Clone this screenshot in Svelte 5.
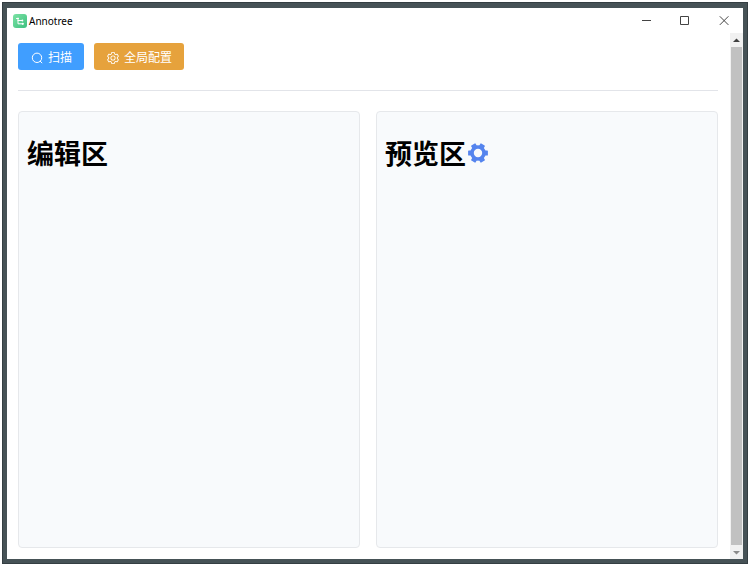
<script lang="ts">
  const teeth = [0, 60, 120, 180, 240, 300]
</script>

<div class="window">
  <header class="titlebar">
    <svg class="titlebar__logo" viewBox="0 0 14 14" aria-hidden="true">
      <defs>
        <linearGradient id="logo" x1="0" y1="0" x2="1" y2="1">
          <stop offset="0" stop-color="#7be2a4" />
          <stop offset="1" stop-color="#3fc080" />
        </linearGradient>
      </defs>
      <rect width="14" height="14" rx="3" fill="url(#logo)" />
      <path d="M3.5 4.5h2M5 4v5.8h4.5M5 6.5h4" fill="none" stroke="#fff" stroke-linecap="round" />
      <circle cx="9.4" cy="6.5" r=".9" fill="#fff" />
      <circle cx="9.8" cy="9.8" r="1.1" fill="#fff" />
    </svg>
    <span class="titlebar__name">Annotree</span>
    <button class="titlebar__control" aria-label="Minimize">
      <svg viewBox="0 0 10 10"><path d="M1 4.5h9" /></svg>
    </button>
    <button class="titlebar__control" aria-label="Maximize">
      <svg viewBox="0 0 10 10"><path d="M.5.5h8v8h-8z" /></svg>
    </button>
    <button class="titlebar__control" aria-label="Close">
      <svg viewBox="0 0 10 10"><path d="M.8.3l8.6 8.6M9.4.3L.8 8.9" /></svg>
    </button>
  </header>

  <div class="body">
    <main class="content">
      <div class="toolbar">
        <button class="button button--primary">
          <svg viewBox="0 0 12 12" aria-hidden="true">
            <circle cx="6" cy="5.8" r="4.7" fill="none" stroke="currentColor" />
            <path d="M9.2 9.2l1.7 1.7" stroke="currentColor" stroke-linecap="round" />
          </svg>
          <span>扫描</span>
        </button>
        <button class="button button--warning">
          <svg viewBox="64 64 896 896" aria-hidden="true">
            <path
              fill="currentColor"
              d="M600.704 64a32 32 0 0 1 30.464 22.208l35.2 109.376c14.784 7.232 28.928 15.36 42.432 24.512l112.384-24.192a32 32 0 0 1 34.432 15.36L944.32 364.8a32 32 0 0 1-4.032 37.504l-77.12 85.12a357.12 357.12 0 0 1 0 49.024l77.12 85.248a32 32 0 0 1 4.032 37.504l-88.704 153.6a32 32 0 0 1-34.432 15.296L708.8 803.904c-13.44 9.088-27.648 17.28-42.368 24.512l-35.264 109.376A32 32 0 0 1 600.704 960H423.296a32 32 0 0 1-30.464-22.208L357.696 828.48a351.616 351.616 0 0 1-42.56-24.64l-112.32 24.256a32 32 0 0 1-34.432-15.36L79.68 659.2a32 32 0 0 1 4.032-37.504l77.12-85.248a357.12 357.12 0 0 1 0-48.896l-77.12-85.248A32 32 0 0 1 79.68 364.8l88.704-153.6a32 32 0 0 1 34.432-15.296l112.32 24.256c13.568-9.152 27.776-17.408 42.56-24.64l35.2-109.312A32 32 0 0 1 423.232 64H600.64zm-23.424 64H446.72l-36.352 113.088-24.512 11.968a294.113 294.113 0 0 0-34.816 20.096l-22.656 15.36-116.224-25.088-65.28 113.152 79.68 88.192-1.92 27.136a293.12 293.12 0 0 0 0 40.192l1.92 27.136-79.808 88.192 65.344 113.152 116.224-25.024 22.656 15.296a294.113 294.113 0 0 0 34.816 20.096l24.512 11.968L446.72 896h130.688l36.48-113.152 24.448-11.904a288.282 288.282 0 0 0 34.752-20.096l22.592-15.296 116.288 25.024 65.28-113.152-79.744-88.192 1.92-27.136a293.12 293.12 0 0 0 0-40.256l-1.92-27.136 79.808-88.128-65.344-113.152-116.288 24.96-22.592-15.232a287.616 287.616 0 0 0-34.752-20.096l-24.448-11.904L577.344 128zM512 320a192 192 0 1 1 0 384 192 192 0 0 1 0-384zm0 64a128 128 0 1 0 0 256 128 128 0 0 0 0-256z"
            />
          </svg>
          <span>全局配置</span>
        </button>
      </div>

      <hr class="divider" />

      <div class="panels">
        <section class="panel">
          <h1>编辑区</h1>
        </section>
        <section class="panel">
          <h1>预览区</h1>
          <button class="panel__settings" aria-label="预览设置">
            <svg viewBox="0 0 20 20" aria-hidden="true">
              <circle cx="10" cy="10" r="6" fill="none" stroke="currentColor" stroke-width="3.6" />
              {#each teeth as angle}
                <path d="M16 7l1.2.4h2q.7 0 .7.7v3.8q0 .7-.7.7h-2L16 13z" fill="currentColor" transform="rotate({angle} 10 10)" />
              {/each}
            </svg>
          </button>
        </section>
      </div>
    </main>

    <div class="scrollbar" aria-hidden="true">
      <svg class="scrollbar__arrow" viewBox="0 0 13 14"><path d="M3 9l3.5-3.5L10 9z" fill="#404040" /></svg>
      <div class="scrollbar__thumb"></div>
      <svg class="scrollbar__arrow" viewBox="0 0 13 14"><path d="M3 6l3.5 3.5L10 6z" fill="#8a8a8a" /></svg>
    </div>
  </div>
</div>

<style>
  :global(body) {
    background: #fff;
  }

  .window {
    display: flex;
    flex-direction: column;
    box-sizing: border-box;
    min-height: calc(100vh - 4px);
    margin: 2px;
    border: 5px solid #465256;
    border-top-width: 6px;
    background: #fff;
    outline: 1px solid #343e42;
    outline-offset: -1px;
    font-family: 'Noto Sans', 'Noto Sans CJK SC', sans-serif;
    color: #000;
  }

  button {
    padding: 0;
    border: none;
    background: none;
    font: inherit;
    color: inherit;
    cursor: pointer;
  }

  .titlebar {
    display: flex;
    align-items: center;
    height: 25px;
    padding-left: 6px;
  }

  .titlebar__logo {
    width: 14px;
    height: 14px;
  }

  .titlebar__name {
    flex: 1;
    margin-left: 2px;
    font-size: 10px;
    line-height: 14px;
  }

  .titlebar__control {
    display: flex;
    align-items: center;
    justify-content: center;
    width: 39px;
    height: 24px;
  }

  .titlebar__control svg {
    width: 10px;
    height: 10px;
    fill: none;
    stroke: #444;
  }

  .body {
    display: flex;
    flex: 1;
  }

  .content {
    display: flex;
    flex: 1;
    flex-direction: column;
    padding: 10px 12px 11px 11px;
  }

  .toolbar {
    display: flex;
    gap: 10px;
  }

  .button {
    display: flex;
    align-items: center;
    gap: 5px;
    height: 27px;
    padding: 2px 12px 0 13px;
    border-radius: 3px;
    font-size: 12px;
    line-height: 16px;
    color: #fff;
  }

  .button svg {
    width: 12px;
    height: 12px;
  }

  .button--primary {
    background: #409eff;
  }

  .button--warning {
    background: #e6a23c;
  }

  .divider {
    width: 100%;
    height: 1px;
    margin: 20px 0;
    border: none;
    background: #e2e4e9;
  }

  .panels {
    display: grid;
    flex: 1;
    grid-template-columns: 1fr 1fr;
    gap: 16px;
  }

  .panel {
    display: flex;
    align-items: flex-start;
    gap: 2px;
    padding: 24px 8px;
    border: 1px solid #e6e8eb;
    border-radius: 4px;
    background: #f8fafc;
  }

  h1 {
    margin: 0;
    font-size: 27px;
    font-weight: 700;
    line-height: 36px;
  }

  .panel__settings {
    display: flex;
    align-items: center;
    height: 34px;
    color: #5584ee;
  }

  .panel__settings svg {
    width: 20px;
    height: 20px;
  }

  .scrollbar {
    display: flex;
    flex-direction: column;
    width: 13px;
    background: #f1f1f1;
  }

  .scrollbar__arrow {
    width: 13px;
    height: 14px;
  }

  .scrollbar__thumb {
    flex: 1;
    margin: 0 1px;
    background: #c1c1c1;
  }
</style>
